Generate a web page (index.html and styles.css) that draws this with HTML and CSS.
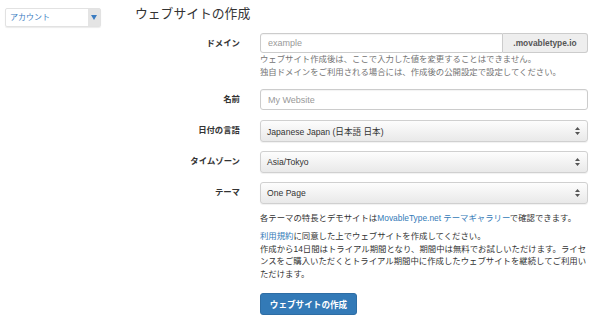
FILE: index.html
```html
<!DOCTYPE html>
<html lang="ja">
<head>
    <meta charset="UTF-8">
    <meta name="viewport" content="width=device-width, initial-scale=1.0">
    <title>ウェブサイトの作成</title>
    <link rel="stylesheet" href="styles.css">
</head>
<body>
    <div class="page">
        <aside class="sidebar">
            <div class="account-select">
                <span class="account-label">アカウント</span>
                <span class="caret-box">
                    <svg width="6" height="5" viewBox="0 0 6 5"><path d="M0 0 L6 0 L3 5 Z" fill="#3b7cc1"/></svg>
                </span>
            </div>
        </aside>

        <main class="main">
            <h1 class="title">ウェブサイトの作成</h1>

            <div class="form-row">
                <label class="form-label">ドメイン</label>
                <div class="form-control">
                    <div class="input-group">
                        <input class="input" type="text" placeholder="example">
                        <span class="addon">.movabletype.io</span>
                    </div>
                    <p class="help">ウェブサイト作成後は、ここで入力した値を変更することはできません。<br>独自ドメインをご利用される場合には、作成後の公開設定で設定してください。</p>
                </div>
            </div>

            <div class="form-row name-row">
                <label class="form-label">名前</label>
                <div class="form-control">
                    <input class="input" type="text" placeholder="My Website">
                </div>
            </div>

            <div class="form-row">
                <label class="form-label">日付の言語</label>
                <div class="form-control">
                    <div class="select">
                        <span>Japanese Japan (日本語 日本)</span>
                        <svg class="arrows" width="5" height="8" viewBox="0 0 5 8"><path d="M2.5 0 L5 3 L0 3 Z M0 5 L5 5 L2.5 8 Z" fill="#555"/></svg>
                    </div>
                </div>
            </div>

            <div class="form-row">
                <label class="form-label">タイムゾーン</label>
                <div class="form-control">
                    <div class="select">
                        <span>Asia/Tokyo</span>
                        <svg class="arrows" width="5" height="8" viewBox="0 0 5 8"><path d="M2.5 0 L5 3 L0 3 Z M0 5 L5 5 L2.5 8 Z" fill="#555"/></svg>
                    </div>
                </div>
            </div>

            <div class="form-row theme-row">
                <label class="form-label">テーマ</label>
                <div class="form-control">
                    <div class="select">
                        <span>One Page</span>
                        <svg class="arrows" width="5" height="8" viewBox="0 0 5 8"><path d="M2.5 0 L5 3 L0 3 Z M0 5 L5 5 L2.5 8 Z" fill="#555"/></svg>
                    </div>
                    <p class="theme-note">各テーマの特長とデモサイトは<a href="#">MovableType.net テーマギャラリー</a>で確認できます。</p>
                    <p class="terms"><a href="#">利用規約</a>に同意した上でウェブサイトを作成してください。<br>作成から14日間はトライアル期間となり、期間中は無料でお試しいただけます。ライセンスをご購入いただくとトライアル期間中に作成したウェブサイトを継続してご利用いただけます。</p>
                    <button class="button" type="button">ウェブサイトの作成</button>
                </div>
            </div>
        </main>
    </div>
</body>
</html>
```

FILE: styles.css
```css
body {
    margin: 0;
    background: #fff;
    color: #333;
    font-family: "Liberation Sans", "Noto Sans CJK JP", sans-serif;
    font-size: 8.4px;
}
p {
    margin: 0;
}
a {
    color: #337ab7;
    text-decoration: none;
}
.page {
    display: flex;
    width: 600px;
}
.sidebar {
    flex: 0 0 130px;
    padding: 8px 0 0 5px;
}
.account-select {
    display: flex;
    width: 96px;
    height: 19px;
    border: 1px solid #e2e2e2;
    border-radius: 2px;
    box-shadow: 0 1px 1px rgba(0,0,0,0.08);
    box-sizing: border-box;
}
.account-label {
    flex: 1;
    padding-left: 4px;
    line-height: 17px;
    color: #3b7cc1;
    font-size: 8px;
}
.caret-box {
    width: 12px;
    display: flex;
    align-items: center;
    justify-content: center;
    background: #e4e4e4;
}
.main {
    flex: 1;
    padding-top: 5px;
}
.title {
    margin: 0 0 10px;
    font-size: 12.8px;
    line-height: 18px;
    font-weight: normal;
    color: #333;
}
.form-row {
    display: flex;
    gap: 20px;
    margin-bottom: 9px;
}
.name-row {
    margin-top: 10px;
    margin-bottom: 10px;
}
.form-label {
    flex: 0 0 105px;
    text-align: right;
    font-weight: bold;
    line-height: 21px;
}
.form-control {
    width: 328px;
}
.input-group {
    display: flex;
}
.input {
    display: block;
    width: 100%;
    height: 21px;
    padding: 0 7px;
    border: 1px solid #ccc;
    border-radius: 3px;
    box-sizing: border-box;
    font-family: inherit;
    font-size: 9px;
    color: #555;
    box-shadow: inset 0 1px 1px rgba(0,0,0,0.05);
}
.input::placeholder {
    color: #999;
}
.input-group .input {
    flex: 1;
    border-radius: 3px 0 0 3px;
    height: 20px;
}
.addon {
    width: 85px;
    height: 20px;
    line-height: 18px;
    text-align: center;
    font-weight: bold;
    color: #555;
    background: #eee;
    border: 1px solid #ccc;
    border-left: none;
    border-radius: 0 3px 3px 0;
    box-sizing: border-box;
}
.help {
    color: #737373;
    line-height: 13px;
}
.select {
    display: flex;
    align-items: center;
    justify-content: space-between;
    height: 22px;
    padding: 0 7px 0 6px;
    border: 1px solid #d0d0d0;
    border-radius: 3px;
    box-sizing: border-box;
    background: linear-gradient(to bottom, #fdfdfd, #e9e9e9);
    box-shadow: 0 1px 1px rgba(0,0,0,0.06);
    color: #333;
    font-size: 8.6px;
}
.theme-note {
    margin-top: 8px;
    line-height: 13px;
}
.terms {
    margin-top: 5px;
    line-height: 12.5px;
}
.button {
    margin-top: 13px;
    width: 97px;
    height: 22px;
    padding: 0;
    background: #337ab7;
    border: 1px solid #2e6da4;
    border-radius: 3px;
    color: #fff;
    font-family: inherit;
    font-size: 8.6px;
    font-weight: bold;
    cursor: pointer;
}
```
